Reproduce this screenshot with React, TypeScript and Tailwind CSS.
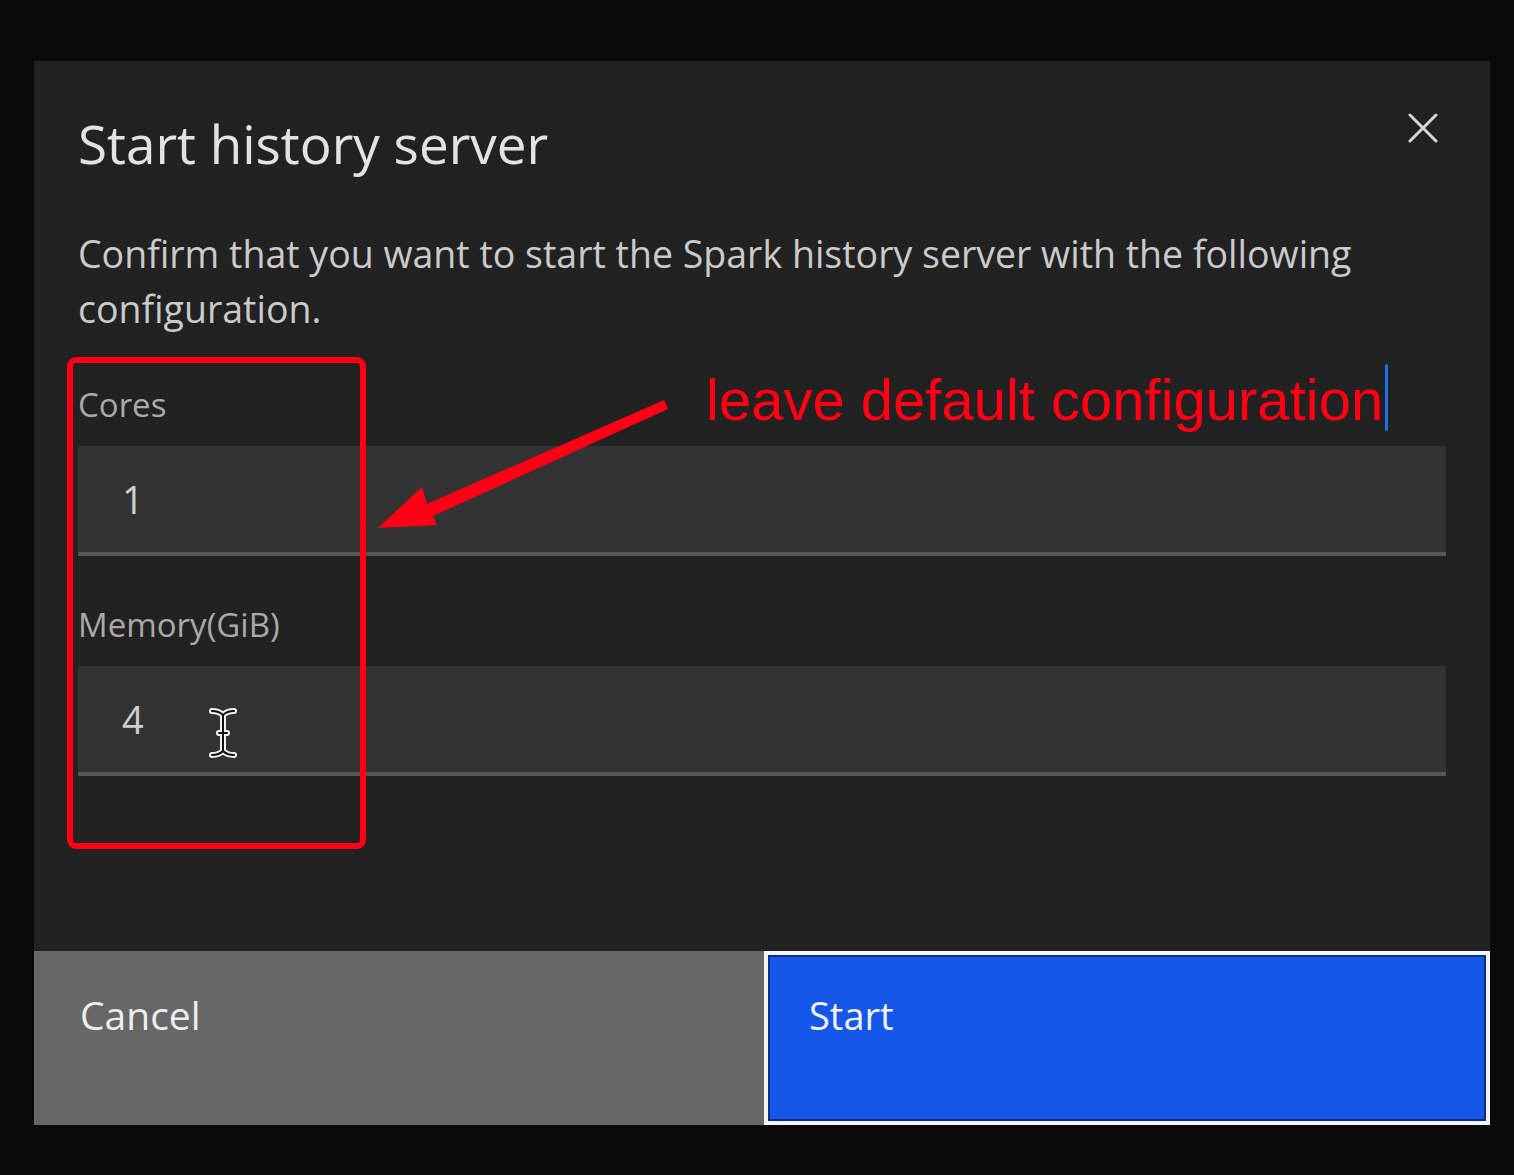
import React from "react";

const plex = { fontFamily: '"Open Sans", "Noto Sans", sans-serif' };

function CloseIcon() {
  return (
    <svg width="30" height="30" viewBox="0 0 30 30" className="text-[#d6d6d6]">
      <path d="M2 2 L28 28 M28 2 L2 28" stroke="currentColor" strokeWidth="3" strokeLinecap="round" />
    </svg>
  );
}

function TextCursor() {
  return (
    <svg width="30" height="52" viewBox="0 0 30 52" className="absolute left-[208px] top-[707px]">
      <path
        d="M4 4 C9 4 12 5 15 8 C18 5 21 4 26 4 M15 8 L15 44 M4 48 C9 48 12 47 15 44 C18 47 21 48 26 48 M11 26 L19 26"
        fill="none"
        stroke="#f2f2f2"
        strokeWidth="6"
        strokeLinecap="round"
      />
      <path
        d="M4 4 C9 4 12 5 15 8 C18 5 21 4 26 4 M15 8 L15 44 M4 48 C9 48 12 47 15 44 C18 47 21 48 26 48 M11 26 L19 26"
        fill="none"
        stroke="#111"
        strokeWidth="2"
        strokeLinecap="round"
      />
    </svg>
  );
}

function Field({ label, value }: { label: string; value: string }) {
  return (
    <div className="flex flex-col">
      <div className="text-[33px] leading-[40px] text-[#a9a9a9]" style={plex}>
        {label}
      </div>
      <div className="mt-[21px] flex h-[110px] items-center border-b-4 border-[#565656] bg-[#333333] pl-[44px]">
        <span className="text-[38px] text-[#cfcfcf]" style={plex}>
          {value}
        </span>
      </div>
    </div>
  );
}

export default function App() {
  return (
    <div className="relative h-[1175px] w-[1514px] overflow-hidden bg-[#0a0a0a] pl-[34px] pt-[61px]">
      <div className="flex h-[1064px] w-[1456px] flex-col bg-[#222222]">
        <div className="px-[44px] pt-[51px]">
          {/* header */}
          <div className="flex items-start justify-between">
            <h2 className="text-[53px] leading-[64px] text-[#e2e2e2]" style={plex}>
              Start history server
            </h2>
            <div className="mr-[8px] mt-[1px]">
              <CloseIcon />
            </div>
          </div>

          <p className="mt-[50px] text-[37.5px] leading-[55px] text-[#cacaca]" style={plex}>
            Confirm that you want to start the Spark history server with the following configuration.
          </p>

          <div className="mt-[49px] flex flex-col gap-[49px]">
            <Field label="Cores" value="1" />
            <Field label="Memory(GiB)" value="4" />
          </div>
        </div>

        {/* footer */}
        <div className="mt-auto flex h-[174px]">
          <button className="flex h-full w-[730px] items-start bg-[#676767] pl-[46px] pt-[39px] text-left">
            <span className="block text-[39px] leading-[50px] text-[#ececec]" style={plex}>
              Cancel
            </span>
          </button>
          <button className="flex h-full flex-1 items-start border-4 border-[#f4f4f4] bg-[#1557e8] pl-[41px] pt-[35px] text-left shadow-[inset_0_0_0_2px_#0d2f8a]">
            <span className="block text-[38px] leading-[50px] text-[#f2f2f2]" style={plex}>
              Start
            </span>
          </button>
        </div>
      </div>

      {/* annotations */}
      <div className="absolute left-[67px] top-[357px] h-[492px] w-[299px] rounded-[9px] border-[6px] border-[#ff0015]" />
      <svg width="1514" height="1175" className="pointer-events-none absolute left-0 top-0">
        <polygon
          points="664,400 668,409 433,516 437,525 378,528 422,487 427,504"
          fill="#ff0015"
        />
      </svg>
      <div
        className="absolute left-[706px] top-[371px] whitespace-nowrap text-[58px] leading-[58px] text-[#ff0015]"
        style={{ fontFamily: '"Liberation Sans", Arial, sans-serif' }}
      >
        leave default configuration
      </div>
      <div className="absolute left-[1385px] top-[364px] h-[67px] w-[3px] rounded-full bg-[#1a73e8]" />
      <TextCursor />
    </div>
  );
}
